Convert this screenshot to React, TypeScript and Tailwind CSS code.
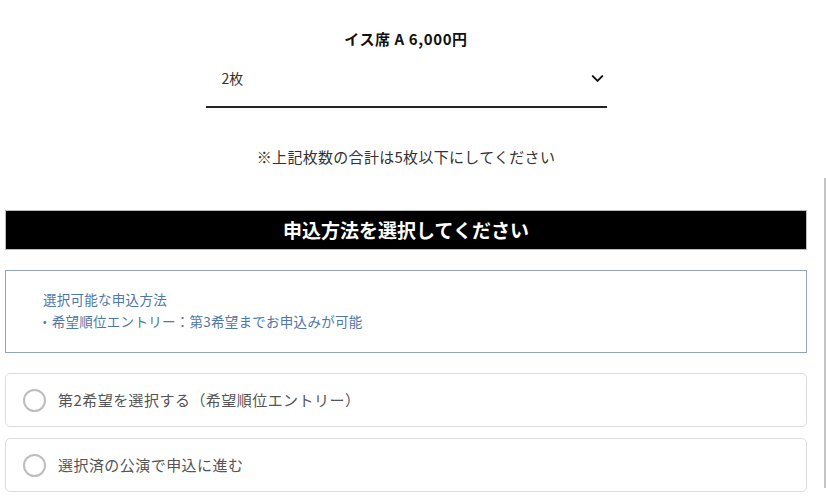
import { ChevronDown } from 'lucide-react';

const font = { fontFamily: '"Noto Sans CJK JP", "Noto Sans", sans-serif' };

const RadioCard = ({ label }: { label: string }) => (
  <label className="flex h-[54px] items-center rounded-[5px] border border-[#dcdcdc] bg-white pl-[17px]">
    <span className="h-[23px] w-[23px] rounded-full border-[2.5px] border-[#bdbdbd]" />
    <span className="ml-[12px] text-[15px] leading-[22px] tracking-[0.03em] text-[#555]">{label}</span>
  </label>
);

export default function App() {
  return (
    <div className="flex min-h-[500px] bg-white" style={font}>
      <main className="ml-[5px] flex w-[802px] flex-col">
        <h2 className="pt-[28px] text-center text-[15px] font-bold leading-[22px] tracking-[0.04em] text-[#111]">
          イス席 A 6,000円
        </h2>

        <div className="mx-auto mt-[4px] flex w-[401px] items-center justify-between border-b-2 border-[#222] pb-[18px] pl-[16px] pr-0 pt-[14px]">
          <span className="text-[14px] leading-[20px] text-[#333]">2枚</span>
          <ChevronDown size={19} strokeWidth={2.5} className="text-[#111]" />
        </div>

        <p className="mt-[38px] text-center text-[15px] leading-[22px] tracking-[0.02em] text-[#333]">
          ※上記枚数の合計は5枚以下にしてください
        </p>

        <div className="mt-[42px] flex h-[40px] items-center justify-center border border-[#bbb] bg-black">
          <span className="text-[19px] font-bold leading-[26px] text-white">申込方法を選択してください</span>
        </div>

        <div className="mt-[20px] border border-[#8fa3bd] pb-[20px] pl-[37px] pt-[17px] text-[13.5px] leading-[22px] tracking-[0.02em] text-[#4f76a8]">
          <p>選択可能な申込方法</p>
          <p className="-ml-[5px]">・希望順位エントリー：第3希望までお申込みが可能</p>
        </div>

        <div className="mt-[20px] flex flex-col gap-[11px]">
          <RadioCard label="第2希望を選択する（希望順位エントリー）" />
          <RadioCard label="選択済の公演で申込に進む" />
        </div>
      </main>
      <div className="ml-[17px] mt-[178px] h-[310px] w-[2px] bg-[#c4c4c4]" />
    </div>
  );
}
